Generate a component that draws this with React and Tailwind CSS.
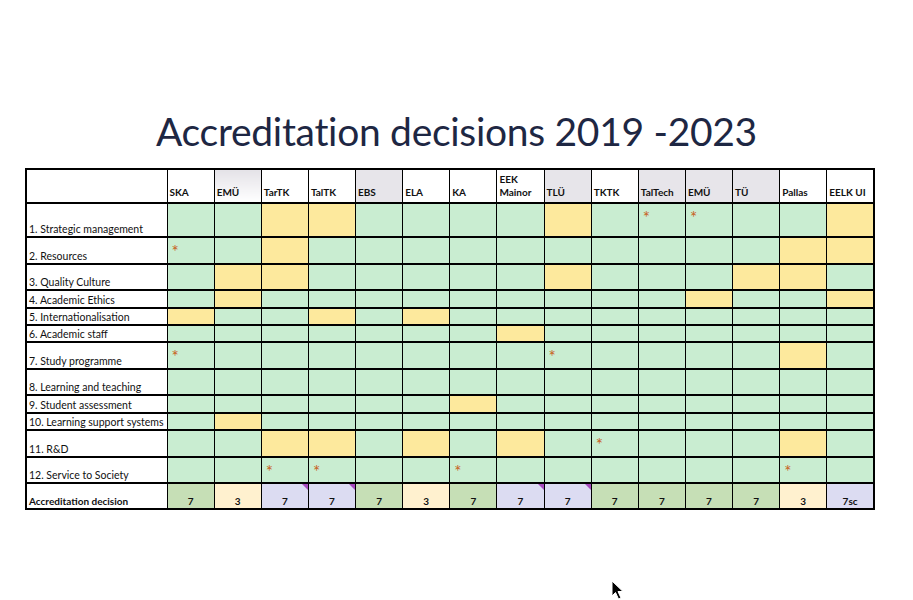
import React from "react";

const schools = [
  { name: "SKA" },
  { name: "EMÜ", head: "fade" },
  { name: "TarTK" },
  { name: "TalTK" },
  { name: "EBS", head: "gray" },
  { name: "ELA" },
  { name: "KA" },
  { name: "EEK Mainor", wrap: true },
  { name: "TLÜ", head: "gray" },
  { name: "TKTK" },
  { name: "TalTech", head: "gray" },
  { name: "EMÜ", head: "gray" },
  { name: "TÜ", head: "gray" },
  { name: "Pallas" },
  { name: "EELK UI" },
];

// y = yellow cells, s = asterisk cells (column indexes)
const rows = [
  { label: "1. Strategic management", h: "h-[34px]", y: [2, 3, 8, 14], s: [10, 11] },
  { label: "2. Resources", h: "h-[27px]", y: [2, 13, 14], s: [0] },
  { label: "3. Quality Culture", h: "h-[26px]", y: [1, 2, 8, 12, 13], s: [] },
  { label: "4. Academic Ethics", h: "h-[18px]", y: [1, 11, 14], s: [] },
  { label: "5. Internationalisation", h: "h-[17px]", y: [0, 3, 5], s: [] },
  { label: "6. Academic staff", h: "h-[17px]", y: [7], s: [] },
  { label: "7. Study programme", h: "h-[27px]", y: [13], s: [0, 8] },
  { label: "8. Learning and teaching", h: "h-[26px]", y: [], s: [] },
  { label: "9. Student assessment", h: "h-[18px]", y: [6], s: [] },
  { label: "10. Learning support systems", h: "h-[17px]", y: [1], s: [] },
  { label: "11. R&D", h: "h-[27px]", y: [2, 3, 5, 7, 13], s: [9] },
  { label: "12. Service to Society", h: "h-[26px]", y: [], s: [2, 3, 6, 13] },
];

const decisions = [
  { v: "7", c: "g" },
  { v: "3", c: "c" },
  { v: "7", c: "l", mark: true },
  { v: "7", c: "l", mark: true },
  { v: "7", c: "g" },
  { v: "3", c: "c" },
  { v: "7", c: "g" },
  { v: "7", c: "l", mark: true },
  { v: "7", c: "l", mark: true },
  { v: "7", c: "g" },
  { v: "7", c: "g" },
  { v: "7", c: "g" },
  { v: "7", c: "g" },
  { v: "3", c: "c" },
  { v: "7sc", c: "l" },
];

const decisionBg = {
  g: "bg-[#c6dfb6]",
  c: "bg-[#fff1cf]",
  l: "bg-[#dcdcf2]",
};

const headBg = {
  gray: "bg-[#e7e5ea]",
  fade: "bg-linear-to-b from-[#e4e2e7] to-white",
};

const Star = () => (
  <span className="absolute left-[4px] top-[5px] text-[17px] leading-none text-[#c8621e]">
    *
  </span>
);

const App = () => {
  return (
    <div
      className="relative w-[913px] h-[600px] bg-white overflow-hidden"
      style={{ fontFamily: "Lato, 'Open Sans', sans-serif" }}
    >
      <h1 className="pt-[106px] h-[168px] text-center text-[39px] leading-[50px] text-[#1e2743] tracking-[-0.3px]">
        Accreditation decisions 2019 -2023
      </h1>

      <table className="ml-[25px] w-[850px] table-fixed border-collapse border-2 border-black text-[10px] text-[#111]">
        <colgroup>
          <col className="w-[141px]" />
          {schools.map((s, i) => (
            <col key={i} />
          ))}
        </colgroup>
        <thead>
          <tr className="h-[34px] border-b-2 border-black">
            <th className="border border-black bg-white"></th>
            {schools.map((s, i) => (
              <th
                key={i}
                className={`border border-black align-bottom text-left font-bold pl-[2px] pb-[3px] leading-[13px] ${
                  headBg[s.head] || "bg-white"
                }`}
              >
                {s.wrap ? (
                  <>
                    EEK
                    <br />
                    Mainor
                  </>
                ) : (
                  s.name
                )}
              </th>
            ))}
          </tr>
        </thead>
        <tbody>
          {rows.map((r, ri) => (
            <tr key={ri} className={`${r.h} border-b-2 border-black`}>
              <td className="border border-black bg-white align-bottom pl-[2px] pb-[1px] leading-[12px] text-[10.5px] whitespace-nowrap">
                {r.label}
              </td>
              {schools.map((s, ci) => (
                <td
                  key={ci}
                  className={`relative border border-black ${
                    r.y.includes(ci) ? "bg-[#fde99d]" : "bg-[#c9edd1]"
                  }`}
                >
                  {r.s.includes(ci) && <Star />}
                </td>
              ))}
            </tr>
          ))}
          <tr className="h-[26px]">
            <td className="border border-black bg-white align-bottom pl-[2px] pb-[1px] font-bold leading-[12px] whitespace-nowrap">
              Accreditation decision
            </td>
            {decisions.map((d, i) => (
              <td
                key={i}
                className={`relative border border-black align-bottom text-center font-bold pb-[1px] leading-[12px] ${decisionBg[d.c]}`}
              >
                {d.mark && (
                  <span className="absolute right-0 top-0 w-0 h-0 border-t-[6px] border-l-[6px] border-t-[#a64bbd] border-l-transparent" />
                )}
                {d.v}
              </td>
            ))}
          </tr>
        </tbody>
      </table>

      <svg
        className="absolute left-[611px] top-[580px]"
        width="14"
        height="20"
        viewBox="0 0 14 20"
      >
        <path
          d="M1 1 L1 16 L4.5 12.5 L7.5 19 L10 18 L7 11.5 L12 11.5 Z"
          fill="#000"
          stroke="#fff"
          strokeWidth="1"
        />
      </svg>
    </div>
  );
};

export default App;
